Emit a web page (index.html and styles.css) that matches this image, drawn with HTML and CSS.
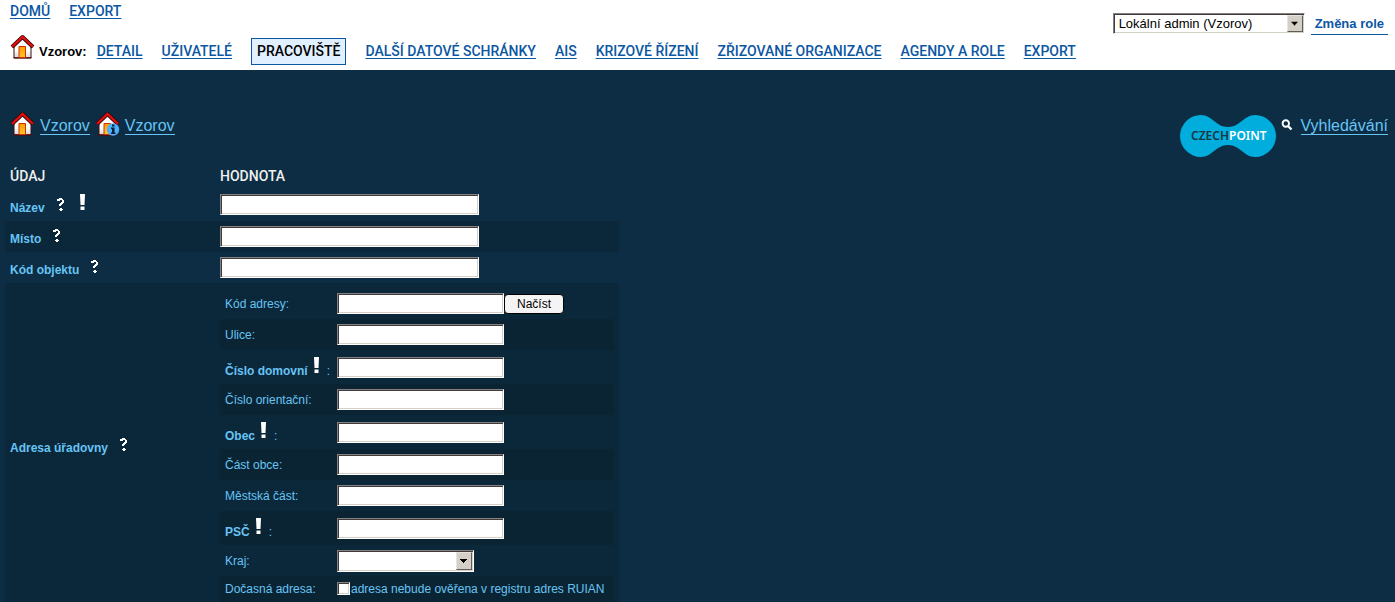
FILE: index.html
```
<!DOCTYPE html>
<html lang="cs">
<head>
<meta charset="utf-8">
<title>Vzorov – Pracoviště</title>
<link rel="stylesheet" href="styles.css">
</head>
<body>
<svg class="defs" aria-hidden="true">
  <defs>
    <linearGradient id="wall" x1="0" y1="0" x2="0" y2="1"><stop offset="0" stop-color="#fff"/><stop offset=".6" stop-color="#fff"/><stop offset="1" stop-color="#d8d4d4"/></linearGradient>
    <linearGradient id="door" x1="0" y1="0" x2="0" y2="1"><stop offset="0" stop-color="#ff9c00"/><stop offset="1" stop-color="#ffc62e"/></linearGradient>
    <symbol id="house" viewBox="0 0 24 24">
      <path d="M3.500 12 12 3l8.500 9v11h-17z" fill="url(#wall)" stroke="#3a1010"/>
      <path d="M3 22.800h18" stroke="#5b0d0d" stroke-width="1.200"/>
      <path d="M8.500 22.500V11.500h6.500v11z" fill="url(#door)" stroke="#d03000"/>
      <path d="M1.500 12 12 2l10.500 10" fill="none" stroke="#210606" stroke-width="3.800" stroke-linejoin="round"/>
      <path d="M1.500 11.800 12 1.800l10.500 10" fill="none" stroke="#e30d0d" stroke-width="2.400"/>
    </symbol>
    <symbol id="help" viewBox="0 0 7 16">
      <path d="M2 2h3v1h1v1h1v3H6v1H5v1H4v1H2V8h1V7h1V6h1V4H3v1H0V3h2zM2 13h1v-1h2v1h1v1H5v1H3v-1H2z" fill="#fff"/>
    </symbol>
    <symbol id="must" viewBox="0 0 6 16">
      <path d="M0 0h5L4.500 11H.5z" fill="#fff"/><path d="M.5 12.500h4V16h-4z" fill="#fff"/>
    </symbol>
  </defs>
</svg>

<header class="top">
  <div class="menus">
    <nav class="menu" aria-label="Hlavní">
      <a href="#">DOMŮ</a>
      <a href="#">EXPORT</a>
    </nav>
    <nav class="menu menu-sub" aria-label="Vzorov">
      <span class="owner"><svg class="house"><use href="#house"/></svg>Vzorov:</span>
      <a href="#">DETAIL</a>
      <a href="#">UŽIVATELÉ</a>
      <a href="#" class="active" aria-current="page">PRACOVIŠTĚ</a>
      <a href="#">DALŠÍ DATOVÉ SCHRÁNKY</a>
      <a href="#">AIS</a>
      <a href="#">KRIZOVÉ ŘÍZENÍ</a>
      <a href="#">ZŘIZOVANÉ ORGANIZACE</a>
      <a href="#">AGENDY A ROLE</a>
      <a href="#">EXPORT</a>
    </nav>
  </div>
  <form class="role">
    <span class="drop drop-role"><select aria-label="Role"><option>Lokální admin (Vzorov)</option></select><svg class="arrow" viewBox="0 0 14 16"><path d="M3 6h7v1H9v1H8v1H7v1H6V9H5V8H4V7H3z"/></svg></span>
    <a href="#">Změna role</a>
  </form>
</header>

<main>
  <div class="bar">
    <nav class="crumbs" aria-label="Cesta">
      <svg class="house"><use href="#house"/></svg><a href="#">Vzorov</a>
      <svg class="house" viewBox="0 0 24 24"><use href="#house" width="24" height="24"/><circle cx="17.500" cy="17.500" r="6.200" fill="#4db0ff"/><path d="M16.500 12.500h2.500v2h-2.500zM15.500 15.500H19v5h1v1.500h-4.500v-1.500h1V17h-1z" fill="#062039"/></svg><a href="#">Vzorov</a>
    </nav>
    <div class="tools">
      <svg class="logo" viewBox="0 0 96 44" role="img" aria-label="Czech Point">
        <path d="M21 1C32 1 36 13 48 13S64 1 75 1a21 21 0 0 1 0 42C64 43 60 31 48 31S32 43 21 43A21 21 0 0 1 21 1z" fill="#00addc"/>
        <text x="11" y="26" class="logo-a">CZECH</text><text x="49" y="26" class="logo-b">POINT</text>
      </svg>
      <svg class="lens" viewBox="0 0 12 12"><circle cx="4.800" cy="4.500" r="3.200" fill="none" stroke="#fff" stroke-width="1.900"/><path d="m7 7 3.500 3.500" stroke="#fff" stroke-width="2.400"/></svg>
      <a href="#">Vyhledávání</a>
    </div>
  </div>

  <table class="form">
    <thead><tr><th class="name">ÚDAJ</th><th>HODNOTA</th></tr></thead>
    <tbody>
      <tr class="tall"><th><label for="nazev">Název</label><svg class="help"><use href="#help"/></svg><svg class="must must-far"><use href="#must"/></svg></th><td><input id="nazev" type="text" class="wide"></td></tr>
      <tr class="dark"><th><label for="misto">Místo</label><svg class="help"><use href="#help"/></svg></th><td><input id="misto" type="text" class="wide"></td></tr>
      <tr><th><label for="kod">Kód objektu</label><svg class="help"><use href="#help"/></svg></th><td><input id="kod" type="text" class="wide"></td></tr>
      <tr class="dark"><th>Adresa úřadovny<svg class="help"><use href="#help"/></svg></th>
        <td class="nest">
          <table class="address">
            <tbody>
              <tr><td class="key"><label for="a1">Kód adresy:</label></td><td><div class="line"><input id="a1" type="text"><button type="button">Načíst</button></div></td></tr>
              <tr class="darker"><td><label for="a2">Ulice:</label></td><td><input id="a2" type="text"></td></tr>
              <tr class="tall"><td><label for="a3"><b>Číslo domovní</b><svg class="must"><use href="#must"/></svg>:</label></td><td><input id="a3" type="text"></td></tr>
              <tr class="darker"><td><label for="a4">Číslo orientační:</label></td><td><input id="a4" type="text"></td></tr>
              <tr class="tall"><td><label for="a5"><b>Obec</b><svg class="must"><use href="#must"/></svg>:</label></td><td><input id="a5" type="text"></td></tr>
              <tr class="darker"><td><label for="a6">Část obce:</label></td><td><input id="a6" type="text"></td></tr>
              <tr><td><label for="a7">Městská část:</label></td><td><input id="a7" type="text"></td></tr>
              <tr class="tall darker"><td><label for="a8"><b>PSČ</b><svg class="must"><use href="#must"/></svg>:</label></td><td><input id="a8" type="text"></td></tr>
              <tr><td><label for="a9">Kraj:</label></td><td><span class="drop drop-region"><select id="a9"><option></option></select><svg class="arrow" viewBox="0 0 14 16"><path d="M3 6h7v1H9v1H8v1H7v1H6V9H5V8H4V7H3z"/></svg></span></td></tr>
              <tr class="short darker"><td>Dočasná adresa:</td><td><div class="line"><input id="a10" type="checkbox"><label for="a10">adresa nebude ověřena v registru adres RUIAN</label></div></td></tr>
            </tbody>
          </table>
        </td></tr>
    </tbody>
  </table>
</main>
</body>
</html>
```
FILE: styles.css
```
* { box-sizing: border-box; }

body {
  margin: 0;
  background: #0c2d43;
  color: #67c4f4;
  font: 12px/14px "Liberation Sans", Arial, sans-serif;
}

.defs { position: absolute; width: 0; height: 0; }

.top {
  display: flex;
  justify-content: space-between;
  align-items: flex-start;
  min-height: 70px;
  padding: 0 7px 5px 10px;
  background: #fff;
}

.menu {
  display: flex;
  align-items: center;
  gap: 19px;
  font: 500 14px/18px Roboto, sans-serif;
}
.menu a {
  color: #0b57a4;
  line-height: 15px;
  text-decoration: underline 1px;
  text-underline-offset: 2px;
}
.menu:first-child { padding-top: 4px; }
.menu-sub { padding-top: 19px; }
.menu .active {
  padding: 5px;
  border: 1px solid #0b57a4;
  background: #e0f0ff;
  color: #000;
  text-decoration: none;
}
.owner {
  display: flex;
  align-items: flex-end;
  gap: 4px;
  margin-right: -9px;
  padding-bottom: 6px;
  color: #000;
  font: bold 13px/15px "Liberation Sans", Arial, sans-serif;
}
.owner .house { margin-top: -4px; }
.house { width: 25px; height: 24px; flex: none; }

.role {
  display: flex;
  align-items: flex-start;
  gap: 6px;
  padding-top: 13px;
}
.role a {
  padding: 0 4px;
  border-bottom: 1px solid #0b57a4;
  color: #0b57a4;
  font: bold 13px/21px "Liberation Sans", Arial, sans-serif;
  text-decoration: none;
}

input[type="text"], select {
  display: block;
  height: 21px;
  margin: 0;
  padding: 0 5px;
  border: 1px solid;
  border-color: #857f7f #fff #fff #857f7f;
  border-radius: 0;
  background: #fff;
  box-shadow: inset 1px 1px #403c3c, inset -1px -1px #d4d0c8;
  color: #000;
  font: 13px/17px "Liberation Sans", Arial, sans-serif;
}
input[type="text"] { width: 167px; }
input[type="text"].wide { width: 259px; }

.drop { position: relative; display: block; }
.drop select { width: 100%; appearance: none; }
.drop-role { width: 192px; }
.drop-region { width: 137px; }
.drop-region select { height: 22px; }
.arrow {
  position: absolute;
  top: 2px;
  right: 2px;
  width: 16px;
  height: calc(100% - 4px);
  border: 1px solid;
  border-color: #e8e4dc #605c58 #605c58 #e8e4dc;
  background: #d4d0c8;
  pointer-events: none;
}

.bar {
  display: flex;
  justify-content: space-between;
  align-items: flex-start;
  padding: 42px 7px 0 10px;
}
.crumbs, .tools {
  display: flex;
  align-items: flex-start;
  gap: 5px;
}
.bar a {
  margin-top: 5px;
  border-bottom: 1px solid #67c4f4;
  color: #67c4f4;
  font-size: 16px;
  line-height: 17px;
  text-decoration: none;
}
.logo { width: 96px; height: 44px; margin-top: 2px; }
.logo text { font: 600 12px "Noto Sans", sans-serif; }
.logo-a { fill: #1d3540; }
.logo-b { fill: #fff; }
.lens { width: 12px; height: 12px; margin: 7px 3px 0 0; }

table { border-collapse: collapse; }
th, td { padding: 0; text-align: left; vertical-align: middle; }
tr { height: 31px; }
.tall { height: 34px; }
.short { height: 26px; }

.form { width: 614px; margin: 6px 5px 0; }
.form thead tr { height: 23px; }
.form thead th {
  color: #f0f0f0;
  font: 500 14px/18px Roboto, sans-serif;
}
.form tr > th:first-child { padding-left: 5px; }
.form .name { width: 215px; }
.dark { background: #0b283b; }
.nest { padding: 5px 5px 5px 0; }
.address { width: 100%; }
.address td:first-child { padding-left: 5px; }
.key { width: 117px; }
.darker { background: #0b2433; }

.help { width: 7px; height: 16px; margin-left: 12px; shape-rendering: crispEdges; }
.must { width: 6px; height: 16px; margin: 0 7px 0 6px; vertical-align: 2px; }
.must-far { margin-left: 16px; }

.line { display: flex; align-items: center; }
.line button {
  width: 60px;
  height: 20px;
  padding: 0;
  border: 1px solid #000;
  border-radius: 4px;
  background: #f4f4f4;
  color: #000;
  font: 12px/16px "Liberation Sans", Arial, sans-serif;
}
.line input[type="checkbox"] {
  appearance: none;
  width: 13px;
  height: 13px;
  margin: 0 1px 2px 0;
  border: 1px solid;
  border-color: #857f7f #fff #fff #857f7f;
  background: #fff;
  box-shadow: inset 1px 1px #403c3c, inset -1px -1px #d4d0c8;
}
```
